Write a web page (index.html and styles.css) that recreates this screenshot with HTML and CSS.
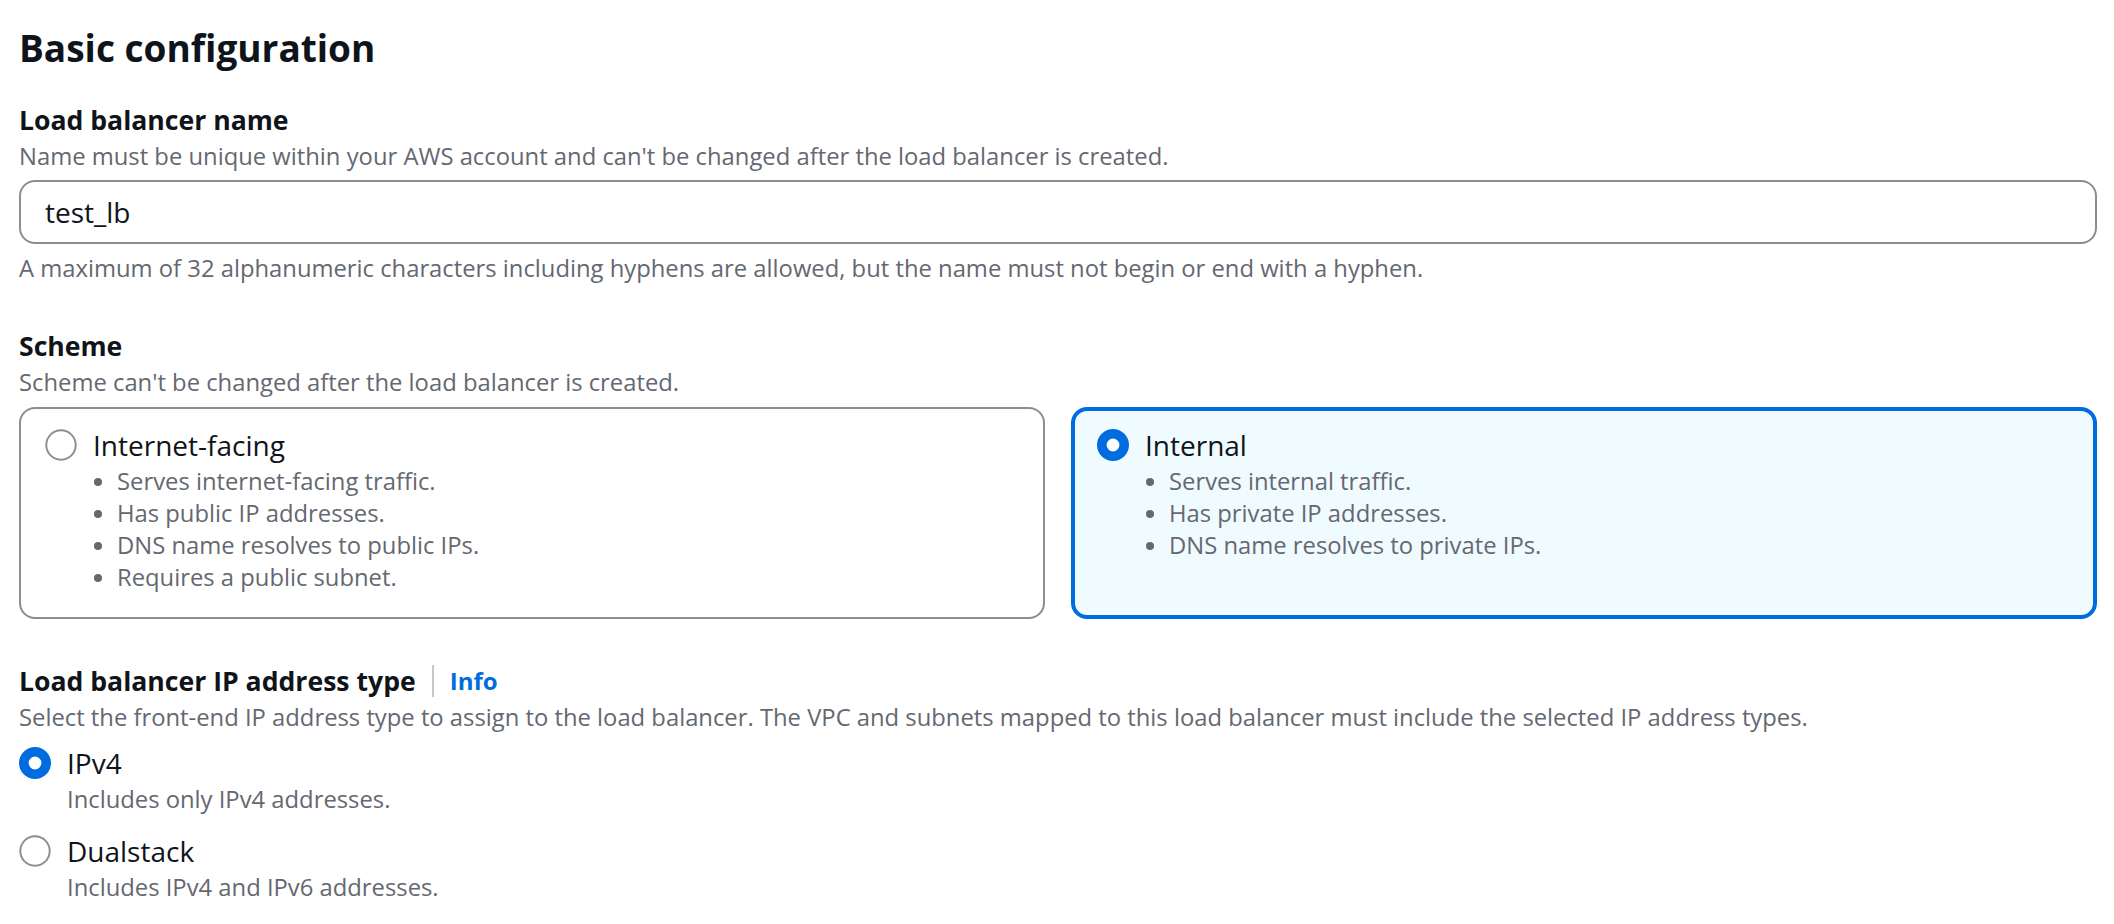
FILE: index.html
```html
<!DOCTYPE html>
<html lang="en">
<head>
<meta charset="utf-8">
<title>Basic configuration</title>
<link rel="stylesheet" href="styles.css">
</head>
<body>
<main class="page">
  <h2 class="title">Basic configuration</h2>
  <div class="fields">
    <section class="field">
      <div class="label">Load balancer name</div>
      <div class="desc">Name must be unique within your AWS account and can't be changed after the load balancer is created.</div>
      <div class="control">
        <div class="input">test_lb</div>
      </div>
      <div class="constraint">A maximum of 32 alphanumeric characters including hyphens are allowed, but the name must not begin or end with a hyphen.</div>
    </section>

    <section class="field">
      <div class="label">Scheme</div>
      <div class="desc">Scheme can't be changed after the load balancer is created.</div>
      <div class="tiles">
        <div class="tile">
          <div class="radio-row">
            <svg class="radio" viewBox="0 0 100 100"><circle cx="50" cy="50" r="46" fill="#fff" stroke="#8c8c94" stroke-width="6"/></svg>
            <span class="radio-label">Internet-facing</span>
          </div>
          <ul class="bullets">
            <li>Serves internet-facing traffic.</li>
            <li>Has public IP addresses.</li>
            <li>DNS name resolves to public IPs.</li>
            <li>Requires a public subnet.</li>
          </ul>
        </div>
        <div class="tile selected">
          <div class="radio-row">
            <svg class="radio" viewBox="0 0 100 100"><circle cx="50" cy="50" r="35" fill="#fff" stroke="#006ce0" stroke-width="30"/></svg>
            <span class="radio-label">Internal</span>
          </div>
          <ul class="bullets">
            <li>Serves internal traffic.</li>
            <li>Has private IP addresses.</li>
            <li>DNS name resolves to private IPs.</li>
          </ul>
        </div>
      </div>
    </section>

    <section class="field">
      <div class="label">Load balancer IP address type <a class="info" href="#">Info</a></div>
      <div class="desc">Select the front-end IP address type to assign to the load balancer. The VPC and subnets mapped to this load balancer must include the selected IP address types.</div>
      <div class="radio-group">
        <div class="radio-item">
          <div class="radio-row">
            <svg class="radio" viewBox="0 0 100 100"><circle cx="50" cy="50" r="35" fill="#fff" stroke="#006ce0" stroke-width="30"/></svg>
            <span class="radio-label">IPv4</span>
          </div>
          <div class="radio-desc">Includes only IPv4 addresses.</div>
        </div>
        <div class="radio-item">
          <div class="radio-row">
            <svg class="radio" viewBox="0 0 100 100"><circle cx="50" cy="50" r="46" fill="#fff" stroke="#8c8c94" stroke-width="6"/></svg>
            <span class="radio-label">Dualstack</span>
          </div>
          <div class="radio-desc">Includes IPv4 and IPv6 addresses.</div>
        </div>
      </div>
    </section>
  </div>
</main>
</body>
</html>
```

FILE: styles.css
```css
html, body {
  margin: 0;
  background: #ffffff;
}

body {
  font-family: "Open Sans", "Noto Sans", sans-serif;
  color: #0f141a;
}

.page {
  padding: 26px 17px 0 19px;
}

.title {
  margin: 0 0 30px;
  font-size: 37px;
  line-height: 44px;
  font-weight: 700;
}

.fields {
  display: flex;
  flex-direction: column;
  gap: 42px;
}

.label {
  display: flex;
  align-items: center;
  font-size: 26.6px;
  line-height: 40px;
  font-weight: 700;
}

.desc {
  font-size: 23.8px;
  line-height: 32px;
  color: #656871;
}

.control {
  margin-top: 8px;
}

.input {
  box-sizing: border-box;
  display: flex;
  align-items: center;
  height: 64px;
  padding: 0 24px;
  border: 2px solid #8c8c94;
  border-radius: 16px;
  font-size: 28px;
  color: #0f141a;
}

.constraint {
  margin-top: 8px;
  font-size: 23.8px;
  line-height: 32px;
  color: #656871;
}

.tiles {
  display: grid;
  grid-template-columns: 1fr 1fr;
  gap: 26px;
  margin-top: 9px;
}

.tile {
  border: 2px solid #8c8c94;
  border-radius: 16px;
  padding: 16px 24px 24px;
  background: #ffffff;
}

.tile.selected {
  border: 4px solid #006ce0;
  background: #f0fbff;
  padding: 14px 22px 22px;
}

.radio-row {
  display: flex;
  align-items: center;
  gap: 16px;
}

.radio {
  width: 32px;
  height: 32px;
  flex: none;
}

.radio-label {
  font-size: 28px;
  line-height: 40px;
}

.bullets {
  margin: 0;
  padding-left: 72px;
  font-size: 23.8px;
  line-height: 32px;
  color: #656871;
}

.info {
  margin-left: 16px;
  padding-left: 16px;
  border-left: 2px solid #c6c6cd;
  color: #006ce0;
  font-size: 24px;
  line-height: 32px;
  font-weight: 700;
  text-decoration: none;
}

.radio-group {
  display: flex;
  flex-direction: column;
  gap: 16px;
  margin-top: 10px;
}

.radio-desc {
  padding-left: 48px;
  font-size: 23.8px;
  line-height: 32px;
  color: #656871;
}
```
